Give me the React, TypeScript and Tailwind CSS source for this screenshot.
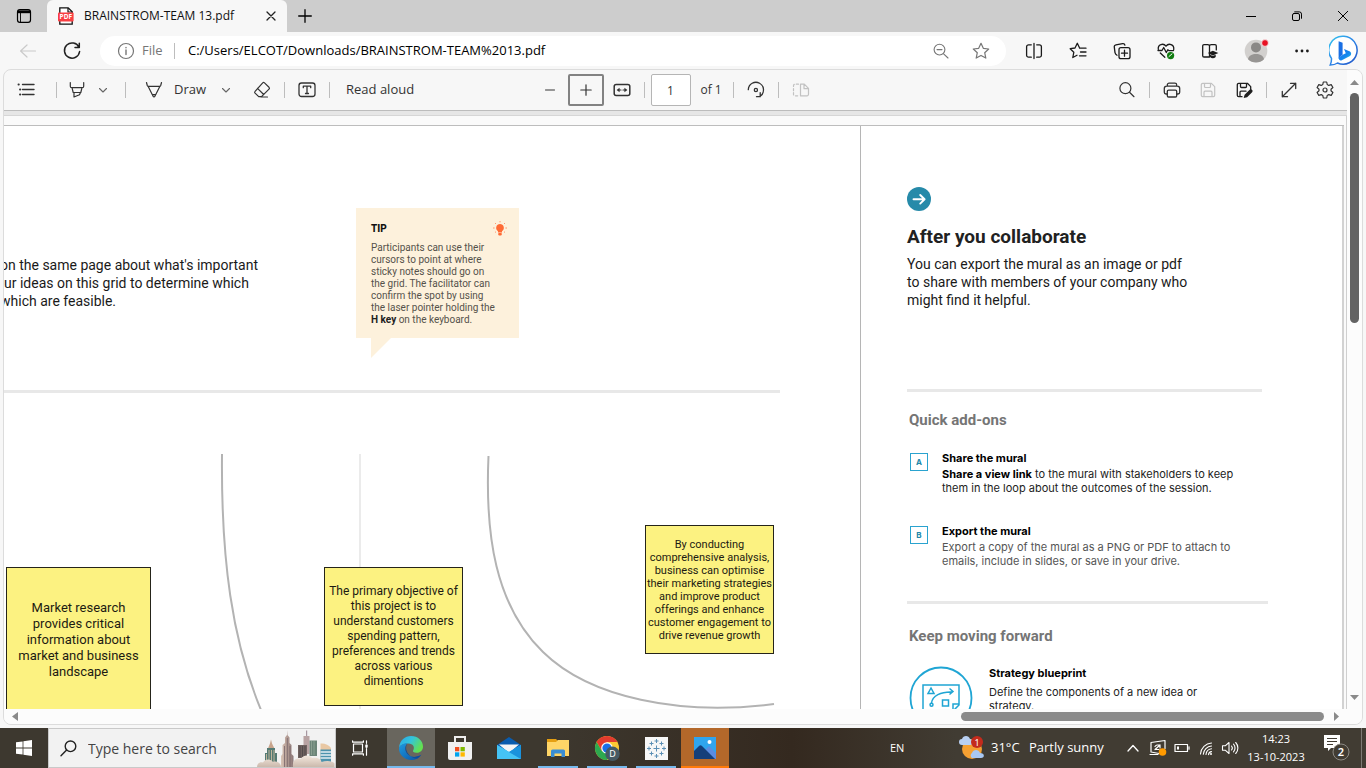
import type { ReactNode } from "react";

const ui = "font-['Open_Sans','Noto_Sans',sans-serif]";

type IconProps = { children: ReactNode; className?: string; size?: number; width?: number };

function Icon({ children, className = "text-[#333]", size = 20, width = 1.2 }: IconProps) {
  return (
    <svg
      width={size}
      height={size}
      viewBox={`0 0 ${size} ${size}`}
      fill="none"
      stroke="currentColor"
      strokeWidth={width}
      strokeLinecap="round"
      strokeLinejoin="round"
      className={`shrink-0 ${className}`}
      aria-hidden="true"
    >
      {children}
    </svg>
  );
}

function IconButton({ label, className = "", children }: { label: string; className?: string; children: ReactNode }) {
  return (
    <button type="button" aria-label={label} className={`flex shrink-0 items-center justify-center ${className}`}>
      {children}
    </button>
  );
}

function Separator({ className = "" }: { className?: string }) {
  return <span className={`h-4 w-px shrink-0 bg-[#bdbdbd] ${className}`} />;
}

function TabStrip() {
  return (
    <div className="flex h-8 shrink-0 items-stretch bg-[#cdcdcd]">
      <IconButton label="Tab actions" className="w-[47px]">
        <Icon size={16} className="text-black" width={1.2}>
          <rect x="1.5" y="1.7" width="13" height="12.6" rx="2.4" />
          <path d="M2 2.4h12v2.800H2z" fill="currentColor" stroke="none" />
          <path d="M4.500 5.400v8.600" strokeWidth=".9" />
        </Icon>
      </IconButton>
      <div className="flex w-60 items-center rounded-t-md bg-[#f7f7f7] pl-[11px]">
        <svg width="16" height="18" viewBox="0 0 16 18" className="shrink-0" aria-hidden="true">
          <path d="M1.8 .8h8.4l4 4v12.4H1.8z" fill="#fff" stroke="#111" strokeWidth="1.3" />
          <path d="M10 1v4h4" fill="none" stroke="#111" strokeWidth="1.2" />
          <rect x="0" y="5.5" width="15.6" height="9" rx="1" fill="#f93e42" />
          <text x="7.8" y="12.4" textAnchor="middle" fontSize="6.5" fontWeight="700" fill="#fff" fontFamily="Noto Sans">
            PDF
          </text>
        </svg>
        <span className="ml-2.5 flex-1 whitespace-nowrap text-[12px] text-[#111]">BRAINSTROM-TEAM 13.pdf</span>
        <IconButton label="Close tab" className="mr-1.5 w-5">
          <Icon size={10} className="text-[#222]" width={1.3}>
            <path d="M1 1l8 8M9 1l-8 8" />
          </Icon>
        </IconButton>
      </div>
      <IconButton label="New tab" className="w-9">
        <Icon size={14} className="text-black" width={1.3}>
          <path d="M7 .7v12.6M.7 7h12.6" />
        </Icon>
      </IconButton>
      <div className="ml-auto flex">
        <IconButton label="Minimize" className="w-[46px]">
          <Icon size={10} className="text-black" width={1}>
            <path d="M0 5.5h10" />
          </Icon>
        </IconButton>
        <IconButton label="Restore" className="w-[46px]">
          <Icon size={10} className="text-black" width={1}>
            <rect x=".5" y="2.5" width="7" height="7" rx="1.5" />
            <path d="M2.7 .9h4.6a2.2 2.2 0 0 1 2.2 2.2v4.2" />
          </Icon>
        </IconButton>
        <IconButton label="Close" className="w-[46px]">
          <Icon size={10} className="text-black" width={1}>
            <path d="M.3 .3l9.4 9.4M9.7 .3L.3 9.7" />
          </Icon>
        </IconButton>
      </div>
    </div>
  );
}

function AddressBar() {
  return (
    <div className="flex h-[37px] shrink-0 items-center pr-[7px] pl-[18px]">
      <IconButton label="Back">
        <Icon className="text-[#cacaca]">
          <path d="M17.5 10H3M9 4L2.6 10 9 16" />
        </Icon>
      </IconButton>
      <IconButton label="Refresh" className="ml-6">
        <Icon className="text-[#222]" width={1.5}>
          <path d="M17 6.4A7.6 7.6 0 1 0 17.6 10.5M17.3 2.3v4.3H13" />
        </Icon>
      </IconButton>
      <div className="ml-[18px] flex h-[30px] min-w-0 flex-1 items-center rounded-full bg-white pr-[15px] pl-4">
        <Icon className="text-[#767676]">
          <circle cx="10" cy="10" r="7.5" />
          <path d="M10 9v4.6M10 6.4v.3" strokeWidth="1.4" />
        </Icon>
        <span className="ml-1.5 w-6 text-[13px] text-[#767676]">File</span>
        <Separator className="ml-2 bg-[#999]" />
        <input
          aria-label="Address"
          defaultValue="C:/Users/ELCOT/Downloads/BRAINSTROM-TEAM%2013.pdf"
          className="ml-[13px] min-w-0 flex-1 bg-transparent text-[13px] text-black outline-none"
        />
        <IconButton label="Zoom out">
          <Icon className="text-[#767676]" width={1.1}>
            <circle cx="8.5" cy="8.6" r="5.4" />
            <path d="M12.6 12.8l4.4 4.2M6 8.6h5" />
          </Icon>
        </IconButton>
        <IconButton label="Add to favorites" className="ml-5">
          <Icon className="text-[#767676]">
            <path d="M10 2.3l2.3 5 5.4.7-4 3.7 1.1 5.4L10 14.4l-4.8 2.7 1.1-5.4-4-3.7 5.4-.7z" />
          </Icon>
        </IconButton>
      </div>
      <IconButton label="Split screen" className="ml-[18px]">
        <Icon className="text-[#1b1b1b]" width={1.3}>
          <path d="M7.300 3.800H4.600a2 2 0 0 0-2 2v8.400a2 2 0 0 0 2 2h2.700M12.700 3.800h2.700a2 2 0 0 1 2 2v8.400a2 2 0 0 1-2 2h-2.700M10 2.500v15" />
        </Icon>
      </IconButton>
      <IconButton label="Favorites" className="ml-6">
        <Icon className="text-[#1b1b1b]" width={1.3}>
          <path d="M11.5 6.8L9.3 2.3 7 7l-4.8.7 3.6 3.6-1 5.2L9 14.2M11.5 7.2H18M12.5 11H18M11.5 14.8H18" />
        </Icon>
      </IconButton>
      <IconButton label="Collections" className="ml-6">
        <Icon className="text-[#1b1b1b]" width={1.3}>
          <rect x="7" y="6.7" width="11" height="11" rx="2" />
          <path d="M12.5 9.2v6M9.5 12.2h6M5 14.3a4 4 0 0 1-2-2.7L2.3 6.2a2 2 0 0 1 1.6-2.4l6.7-1.2a2 2 0 0 1 2.3 1.6" />
        </Icon>
      </IconButton>
      <IconButton label="Browser essentials" className="ml-6">
        <Icon className="text-[#1b1b1b]" width={1.3}>
          <path d="M2.3 8.4C1.6 3.4 7.4 1.6 10 5.2 12.6 1.6 18.5 3.3 17.7 8.6M2 9.5h4l1.7-3 2.6 5 1.5-2.7 1 .8h4.7M4.3 12l4.5 4.3" />
          <circle cx="14.6" cy="14.6" r="3.6" fill="#107c10" stroke="none" />
          <path d="M13 15.5l3-2.6" stroke="#fff" strokeWidth="1" />
        </Icon>
      </IconButton>
      <IconButton label="Read view" className="ml-6">
        <Icon className="text-[#1b1b1b]" width={1.3}>
          <path d="M9.5 16H4a1.3 1.3 0 0 1-1.3-1.3V4.9A1.3 1.3 0 0 1 4 3.6h3.8c1 0 1.7.7 1.7 1.5V16M9.5 5.1c0-.8.8-1.5 1.7-1.5H15a1.3 1.3 0 0 1 1.3 1.3v4" />
          <path d="M12.8 9.7l5.6 2.4-5.600 2.400-5-2.400z" fill="currentColor" stroke="none" />
          <path d="M10 13.7v2.2c1.6 1.7 4 1.7 5.700 0v-2.200l-2.900 1.300z" fill="currentColor" stroke="none" />
        </Icon>
      </IconButton>
      <IconButton label="Profile" className="ml-6">
        <svg width="24" height="24" viewBox="0 0 24 24" className="overflow-visible" aria-hidden="true">
          <circle cx="12" cy="12" r="11.3" fill="#d2d0ce" />
          <circle cx="12" cy="8.4" r="5" fill="#8a8886" />
          <path d="M4 20.2c1-7 15-7 16 0a11.3 11.3 0 0 1-16 0z" fill="#979593" />
          <circle cx="21" cy="4" r="3.4" fill="#e81123" stroke="#f7f7f7" strokeWidth=".8" />
        </svg>
      </IconButton>
      <IconButton label="Settings and more" className="ml-6">
        <Icon className="text-[#1b1b1b]">
          <g fill="currentColor" stroke="none">
            <circle cx="4.6" cy="10" r="1.4" />
            <circle cx="10" cy="10" r="1.4" />
            <circle cx="15.4" cy="10" r="1.4" />
          </g>
        </Icon>
      </IconButton>
      <IconButton label="Bing" className="ml-[17px]">
        <svg width="30" height="32" viewBox="0 0 30 32" aria-hidden="true">
          <defs>
            <linearGradient id="bingRing" x1="0" y1="0" x2="1" y2="1">
              <stop offset="0" stopColor="#35c8ee" />
              <stop offset=".5" stopColor="#2f86e8" />
              <stop offset="1" stopColor="#1d4fc4" />
            </linearGradient>
            <linearGradient id="bingB" x1="0" y1="0" x2="1" y2="1">
              <stop offset="0" stopColor="#1a72ea" />
              <stop offset=".6" stopColor="#1488ee" />
              <stop offset="1" stopColor="#35d3dd" />
            </linearGradient>
          </defs>
          <path d="M15 1.2a14 14 0 1 1-6.500 26.800c-2 1.400-4.500 2-7.300 2 .9-1.700 1.400-3.400 1.300-6.600A14 14 0 0 1 15 1.200z" fill="#fff" stroke="url(#bingRing)" strokeWidth="1.500" />
          <path d="M9.600 6.200l4 1.600v11.800l-4 3.800z" fill="#1a6fe4" />
          <path d="M9.600 22.800l4.200-3 3-1.600-1.800-4.200 6 2.400c1.400.8 1.700 3.400 0 4.600l-8.200 4.200c-2 .7-3.200-.6-3.200-2.400z" fill="url(#bingB)" />
        </svg>
      </IconButton>
    </div>
  );
}

function Chevron() {
  return (
    <Icon size={12} className="text-[#666]" width={1.1}>
      <path d="M2.500 4.500L6 8l3.500-3.500" />
    </Icon>
  );
}

function PdfToolbar() {
  return (
    <div className="flex h-[41px] shrink-0 items-center border-b border-[#bcbcbc] text-[#333]">
      <div className="flex flex-1 items-center pl-3">
        <IconButton label="Table of contents">
          <Icon width={1.400}>
            <path d="M6.500 4.500H18M6.500 9.500H18M6.500 14.500H18" />
            <path d="M2.500 4.500h.3M4 9.500h.3M4 14.500h.3" strokeWidth="1.900" />
          </Icon>
        </IconButton>
        <Separator className="ml-5" />
        <IconButton label="Highlight" className="ml-2.5">
          <Icon>
            <path d="M3.300 2.500v3.700a1.500 1.500 0 0 0 1.500 1.500h10.400a1.500 1.500 0 0 0 1.500-1.500V2.500M5 7.700l1.200 4.800h7.600L15 7.700M7 12.700V17l5.500-2.300 1-2.200" />
          </Icon>
        </IconButton>
        <IconButton label="Highlight options" className="ml-2.5">
          <Chevron />
        </IconButton>
        <Separator className="ml-4" />
        <button type="button" className="ml-[18px] flex w-[88px] shrink-0 items-center text-[13px] whitespace-nowrap">
          <Icon>
            <path d="M2.500 2.500l.8 3c.2.600.6.900 1.200.9h11c.6 0 1-.3 1.200-.9l.8-3M4.200 6.600l4.900 9.700c.4.800 1.400.8 1.800 0l4.900-9.700M8.200 14.600h3.600" />
          </Icon>
          <span className="ml-2.5 flex-1 text-left">Draw</span>
          <Chevron />
        </button>
        <IconButton label="Erase" className="ml-5">
          <Icon>
            <path d="M10.700 2.900a1.300 1.300 0 0 1 1.800 0l4.500 4.400a1.300 1.300 0 0 1 0 1.800l-7.500 7.500H6.700l-3.600-3.500a1.300 1.300 0 0 1 0-1.800zM5.500 8.300l6.200 6.200M9 17h6.500" />
          </Icon>
        </IconButton>
        <Separator className="ml-3" />
        <IconButton label="Add text" className="ml-3">
          <Icon width={1.300}>
            <rect x="2" y="3" width="16" height="13.500" rx="2.500" />
            <path d="M6.300 7.700V6.200h7.400v1.500M10 6.200v7.300M8.500 13.500h3" />
          </Icon>
        </IconButton>
        <Separator className="ml-3" />
        <button type="button" className="ml-4 text-[13px] whitespace-nowrap">
          Read aloud
        </button>
      </div>

      <div className="flex shrink-0 items-center text-[12px]">
        <IconButton label="Zoom out of page" className="w-[18px]">
          <Icon size={10} className="text-[#777]" width={1.500}>
            <path d="M.500 5h9" />
          </Icon>
        </IconButton>
        <IconButton label="Zoom in" className="ml-[9px] h-8 w-9 rounded-xs border-2 border-[#828282]">
          <Icon size={12} width={1.200}>
            <path d="M6 .8v10.400M.8 6h10.400" />
          </Icon>
        </IconButton>
        <IconButton label="Fit to width" className="ml-2">
          <Icon width={1.500}>
            <rect x="2.200" y="4.500" width="15.600" height="11" rx="2" />
            <path d="M9 10H6.500M11 10h2.500" strokeWidth="1.200" />
            <path d="M4.600 10l3-2.300v4.600zM15.400 10l-3-2.300v4.600z" fill="currentColor" stroke="none" />
          </Icon>
        </IconButton>
        <Separator className="ml-3" />
        <input
          aria-label="Page number"
          defaultValue="1"
          className="ml-1.5 h-8 w-10 rounded-xs border border-[#b5b5b5] bg-white text-center outline-none"
        />
        <span className="ml-2.5 w-6 whitespace-nowrap">of 1</span>
        <Separator className="ml-2" />
        <IconButton label="Rotate" className="ml-3">
          <Icon width={1.300}>
            <path d="M2.300 9.600A7.600 7.600 0 1 1 14.200 16.200M14.200 12.700v4h-3.700" />
            <circle cx="9.900" cy="10" r="1.600" />
          </Icon>
        </IconButton>
        <Separator className="ml-3" />
        <IconButton label="Page view" className="ml-3">
          <Icon className="text-[#c2c2c2]">
            <path d="M9.500 4.200v11.600H16a1.500 1.500 0 0 0 1.500-1.500V8.400l-4.200-4.200zM13 4.500v4.200h4.300" />
            <path d="M7.500 4.200H4A1.500 1.500 0 0 0 2.500 5.700v8.600A1.500 1.500 0 0 0 4 15.800h3.500" strokeDasharray="2.200 2" />
          </Icon>
        </IconButton>
      </div>

      <div className="flex flex-1 items-center justify-end pr-3">
        <IconButton label="Find">
          <Icon width={1.200}>
            <circle cx="8.400" cy="8.200" r="5.500" />
            <path d="M12.500 12.300l4.500 4.400" />
          </Icon>
        </IconButton>
        <Separator className="ml-3" />
        <IconButton label="Print" className="ml-3">
          <Icon width={1.300}>
            <path d="M5.300 6.200V5a1.800 1.800 0 0 1 1.800-1.800h5.800A1.800 1.800 0 0 1 14.700 5v1.200M5.300 14H4a1.700 1.700 0 0 1-1.700-1.700V8.600A2.400 2.400 0 0 1 4.700 6.200h10.600a2.400 2.400 0 0 1 2.400 2.400v3.700A1.700 1.700 0 0 1 16 14h-1.300" />
            <rect x="5.300" y="10.200" width="9.400" height="6.800" rx="1.300" />
          </Icon>
        </IconButton>
        <IconButton label="Save" className="ml-4">
          <Icon className="text-[#c2c2c2]">
            <path d="M4.700 3.300h8.700l3.300 3.300v8.700a1.400 1.400 0 0 1-1.400 1.400H4.700a1.400 1.400 0 0 1-1.400-1.400V4.700a1.400 1.400 0 0 1 1.400-1.400zM6.500 3.500v3a1 1 0 0 0 1 1h4a1 1 0 0 0 1-1v-3M6 16.500v-4.300a1 1 0 0 1 1-1h6a1 1 0 0 1 1 1v4.300" />
          </Icon>
        </IconButton>
        <IconButton label="Save as" className="ml-4">
          <Icon className="text-[#1f1f1f]" width={1.300}>
            <path d="M8 16.700H4.700a1.400 1.400 0 0 1-1.400-1.400V4.700a1.400 1.400 0 0 1 1.400-1.400h8.700l3.300 3.300v3M6.500 3.500v3a1 1 0 0 0 1 1h4a1 1 0 0 0 1-1v-3M6 16.500v-4.300a1 1 0 0 1 1-1h5" />
            <path d="M15.600 9.800a1.700 1.700 0 0 1 2.500 2.400l-5 5-3.400.9.900-3.300z" fill="currentColor" stroke="none" />
          </Icon>
        </IconButton>
        <Separator className="ml-3" />
        <IconButton label="Full screen" className="ml-3">
          <Icon width={1.300}>
            <path d="M3.300 16.700L16.700 3.300M11.500 3.300h5.200v5.200M3.300 11.500v5.200h5.200" />
          </Icon>
        </IconButton>
        <IconButton label="Settings" className="ml-4">
          <Icon width={1.200}>
            <path d="M8.300 2h3.400l.5 2.500 1.600.9 2.400-.8 1.700 2.900L16 9.200v1.600l1.900 1.700-1.700 2.900-2.400-.8-1.600.9-.5 2.500H8.300l-.5-2.500-1.600-.9-2.400.8-1.700-2.900L4 10.800V9.200L2.100 7.500l1.700-2.900 2.400.8 1.600-.9z" />
            <circle cx="10" cy="10" r="2" />
          </Icon>
        </IconButton>
      </div>
    </div>
  );
}

function Note({ className, children }: { className: string; children: ReactNode }) {
  return (
    <div
      className={`absolute flex items-center justify-center border border-[#25241a] bg-[#fcf281] text-center whitespace-nowrap text-[#1c1b12] ${className}`}
    >
      <p>{children}</p>
    </div>
  );
}

function TipCard() {
  return (
    <div className="w-[163px] shrink-0">
      <div className="h-[130px] bg-[#fdf1dc] pt-[13px] pl-[15px]">
        <div className="flex items-center justify-between pr-3">
          <h3 className="text-[10px] leading-[16px] font-extrabold text-[#111]">TIP</h3>
          <svg width="14" height="16" viewBox="0 0 14 16" aria-hidden="true">
            <path d="M7 3a3.900 3.900 0 0 1 2 7.200V11.500H5v-1.300A3.900 3.900 0 0 1 7 3z" fill="#ff6b35" />
            <rect x="5.200" y="12" width="3.600" height="2.400" rx=".8" fill="#ff6b35" />
            <path d="M7 0v1.400M2 2l1 1M12 2l-1 1M0 7h1.600M12.400 7H14M2 11.500l1-.8M12 11.500l-1-.8" stroke="#ff8d63" strokeWidth=".9" />
          </svg>
        </div>
        <p className="mt-[5px] text-[10px] leading-[12px] whitespace-nowrap text-[#55524b]">
          Participants can use their
          <br />
          cursors to point at where
          <br />
          sticky notes should go on
          <br />
          the grid. The facilitator can
          <br />
          confirm the spot by using
          <br />
          the laser pointer holding the
          <br />
          <b className="text-[#222]">H key</b> on the keyboard.
        </p>
      </div>
      <svg width="20" height="20" viewBox="0 0 20 20" className="ml-[15px] block" aria-hidden="true">
        <path d="M0 0h20L0 20z" fill="#fdf1dc" />
      </svg>
    </div>
  );
}

function Board() {
  return (
    <section className="flex min-w-0 flex-1 flex-col overflow-hidden">
      <div className="flex h-[264px] shrink-0 items-start pt-[82px]">
        <p className="mt-12 -ml-1 w-[356px] shrink-0 text-[14px] leading-[18px] whitespace-nowrap text-[#1a1a1a]">
          on the same page about what's important
          <br />
          <span className="pl-1">ur ideas on this grid to determine which</span>
          <br />
          which are feasible.
        </p>
        <TipCard />
      </div>
      <hr className="mr-20 h-[3px] shrink-0 border-0 bg-[#e8e8e8]" />
      <div className="relative flex-1 overflow-hidden">
        <svg width="856" height="317" viewBox="4 393 856 317" fill="none" className="absolute top-0 left-0" aria-hidden="true">
          <path d="M360 454V710" stroke="#ebebeb" strokeWidth="2" />
          <path d="M222 454C221 560 232 640 261 710" stroke="#b3b3b3" strokeWidth="2" />
          <path d="M488.500 456C485 535 495 605 543 652C590 698 680 716 774 704" stroke="#b3b3b3" strokeWidth="2" />
        </svg>
        <Note className="top-[174px] left-[2px] h-[146px] w-[145px] text-[13px] leading-[16px]">
          Market research
          <br />
          provides critical
          <br />
          information about
          <br />
          market and business
          <br />
          landscape
        </Note>
        <Note className="top-[174px] left-[320px] h-[139px] w-[139px] text-[12px] leading-[15px]">
          The primary objective of
          <br />
          this project is to
          <br />
          understand customers
          <br />
          spending pattern,
          <br />
          preferences and trends
          <br />
          across various
          <br />
          dimentions
        </Note>
        <Note className="top-[132px] left-[641px] h-[129px] w-[129px] text-[11px] leading-[13px]">
          By conducting
          <br />
          comprehensive analysis,
          <br />
          business can optimise
          <br />
          their marketing strategies
          <br />
          and improve product
          <br />
          offerings and enhance
          <br />
          customer engagement to
          <br />
          drive revenue growth
        </Note>
      </div>
    </section>
  );
}

function AddOn({ letter, title, children, className = "" }: { letter: string; title: string; children: ReactNode; className?: string }) {
  return (
    <div className={`flex items-start font-['Inter',sans-serif] ${className}`}>
      <span className="mt-[3px] flex h-[18px] w-[18px] shrink-0 items-center justify-center border border-[#2aa3cf] text-[8px] font-bold text-[#2287a8]">
        {letter}
      </span>
      <div className="ml-3.5 whitespace-nowrap">
        <h3 className="text-[11px] leading-[16px] font-bold text-black">{title}</h3>
        <p className="mt-px text-[11px] leading-[14px]">{children}</p>
      </div>
    </div>
  );
}

function AfterPanel() {
  return (
    <section className="w-[484px] shrink-0 overflow-hidden border-r-2 border-l border-r-[#d2d2d2] border-l-[#b5b5b5] pt-[61px] pl-[46px]">
      <svg width="24" height="24" viewBox="0 0 24 24" className="block" aria-hidden="true">
        <circle cx="12" cy="12" r="12" fill="#268aa9" />
        <path d="M6.500 12.300h11M13.200 8l4.400 4.300-4.400 4.300" fill="none" stroke="#fff" strokeWidth="1.900" strokeLinecap="round" strokeLinejoin="round" />
      </svg>
      <h1 className="mt-3.5 text-[19px] leading-[24px] font-bold text-[#212121]">After you collaborate</h1>
      <p className="mt-1.5 text-[14px] leading-[18px] whitespace-nowrap text-[#1a1a1a]">
        You can export the mural as an image or pdf
        <br />
        to share with members of your company who
        <br />
        might find it helpful.
      </p>
      <hr className="mt-20 h-[3px] w-[355px] border-0 bg-[#e8e8e8]" />
      <h2 className="mt-[18px] ml-0.5 text-[15px] leading-[20px] font-bold text-[#757575]">Quick add-ons</h2>
      <AddOn letter="A" title="Share the mural" className="mt-5 ml-[3px] text-[#222]">
        <b className="text-black">Share a view link</b> to the mural with stakeholders to keep
        <br />
        them in the loop about the outcomes of the session.
      </AddOn>
      <AddOn letter="B" title="Export the mural" className="mt-7 ml-[3px] text-[#555]">
        Export a copy of the mural as a PNG or PDF to attach to
        <br />
        emails, include in slides, or save in your drive.
      </AddOn>
      <hr className="mt-[33px] h-[3px] w-[361px] border-0 bg-[#e8e8e8]" />
      <h2 className="mt-[22px] ml-0.5 text-[15px] leading-[20px] font-bold text-[#757575]">Keep moving forward</h2>
      <div className="mt-5 ml-0.5 flex items-start">
        <svg width="64" height="64" viewBox="0 0 64 64" fill="none" stroke="#1fa5d4" strokeWidth="1.500" className="shrink-0" aria-hidden="true">
          <circle cx="32" cy="32" r="30.500" strokeWidth="1.800" />
          <path d="M14 48V19h36v20l-6 6H14M50 38h-6v7" />
          <path d="M22 22l-3 5.500h6z" />
          <path d="M22.500 37c1-7 9-11.500 21-11M40.500 22.500l3.500 3-3.500 3" />
          <circle cx="22.500" cy="38.700" r="1.500" />
          <rect x="33.500" y="34" width="6" height="6" />
        </svg>
        <div className="ml-4 font-['Inter',sans-serif] text-[11px] leading-[14px] whitespace-nowrap">
          <h3 className="font-bold text-black">Strategy blueprint</h3>
          <p className="mt-[5px] text-[#222]">
            Define the components of a new idea or
            <br />
            strategy.
          </p>
        </div>
      </div>
    </section>
  );
}

function Viewer() {
  return (
    <div className="mr-[3px] ml-[3px] flex min-h-0 flex-1 overflow-hidden rounded-lg border border-[#dcdcdc] bg-[#f7f7f7]">
      <div className="flex min-w-0 flex-1 flex-col">
        <PdfToolbar />
        <div className="h-[5px] shrink-0 border-b border-[#d6d6d6] bg-[#e6e6e6]" />
        <main className="flex min-h-0 flex-1 overflow-hidden border-r border-[#cfcfcf] bg-[#fafafa] pt-[9px] pr-0.5 font-['Roboto','Inter',sans-serif]">
          <div className="flex min-w-0 flex-1 border-t border-[#bdbdbd] bg-white">
            <Board />
            <AfterPanel />
          </div>
        </main>
        <div className="flex h-[15px] shrink-0 items-center justify-between bg-[#fcfcfc] pr-2 pl-2">
          <svg width="6" height="9" viewBox="0 0 6 9" aria-hidden="true">
            <path d="M6 0v9L0 4.500z" fill="#8a8a8a" />
          </svg>
          <div className="mr-2.5 ml-auto h-[9px] w-[363px] rounded-full bg-[#8b8b8b]" />
          <svg width="5" height="9" viewBox="0 0 5 9" aria-hidden="true">
            <path d="M0 0v9l5-4.500z" fill="#8a8a8a" />
          </svg>
        </div>
      </div>
      <div className="flex w-[15px] shrink-0 flex-col items-center bg-[#fcfcfc] pt-2.5 pb-6">
        <svg width="9" height="5" viewBox="0 0 9 5" aria-hidden="true">
          <path d="M0 5h9L4.500 0z" fill="#8a8a8a" />
        </svg>
        <div className="mt-2 h-[230px] w-[9px] rounded-full bg-[#636363]" />
        <svg width="9" height="5" viewBox="0 0 9 5" className="mt-auto" aria-hidden="true">
          <path d="M0 0h9L4.500 5z" fill="#8a8a8a" />
        </svg>
      </div>
    </div>
  );
}

function CityArt() {
  return (
    <svg width="78" height="38" viewBox="0 0 78 38" className="shrink-0" aria-hidden="true">
      <defs>
        <linearGradient id="cloud" x1="0" y1="0" x2="0" y2="1">
          <stop offset="0" stopColor="#f4e9df" />
          <stop offset="1" stopColor="#cbb9ac" />
        </linearGradient>
        <linearGradient id="tower" x1="0" y1="0" x2="1" y2="0">
          <stop offset="0" stopColor="#d9c4b6" />
          <stop offset=".5" stopColor="#b39c94" />
          <stop offset="1" stopColor="#8b7777" />
        </linearGradient>
      </defs>
      <path d="M14 10.500l1 4 3 6h-7.500l2.500-6z" fill="#c8a48c" />
      <path d="M10 19h8v5h2v9H8v-9h2z" fill="#547a73" />
      <path d="M9.500 25v9M12 21v13M14.500 21v13M17 21v13" stroke="#cdbb9f" strokeWidth=".9" />
      <path d="M30.500 1v5l2 2.500V14l2 2v9l2 2v11H24V27l1.500-2v-9l2.500-2V8.500L30 6z" fill="url(#tower)" />
      <path d="M27.500 17v21M30.300 9v29M33 17v21" stroke="#6f5c63" strokeWidth=".7" />
      <path d="M49 1.500h1.200V8H49z" fill="#a797a0" />
      <path d="M46.500 7h6v18h-6z" fill="#b8a3a3" />
      <path d="M41 16h9v13h-9z" fill="#6f625f" />
      <path d="M43 17v11M45.500 17v11M48 17v11" stroke="#4f4849" strokeWidth=".9" />
      <path d="M52.500 11.500H60V27h-7.500z" fill="#6c8579" />
      <path d="M54.500 12v14M57 12v14" stroke="#93a798" strokeWidth=".8" />
      <path d="M63.500 20v-5.500c4-.5 8 1 10.500 4.500v12H63.500z" fill="#e9c8a4" />
      <path d="M63.500 20.500H74V34H63.500z" fill="#4d93ad" />
      <path d="M63.500 23H74M63.500 26H74M63.500 29H74" stroke="#e3eef2" strokeWidth="1.300" />
      <path d="M0 38c0-3.500 3-5.500 6-4.500 2-4 8-4 10-.5 4-1.500 8 1 8 5zM36 38c-1-6 3-10 8-8 1-4 9-5 11-1 5-1 9 1 9.500 4 5-2 12-1 13 1.500V38z" fill="url(#cloud)" />
    </svg>
  );
}

function TaskButton({ label, className = "", bar, children }: { label: string; className?: string; bar?: string; children: ReactNode }) {
  return (
    <button type="button" aria-label={label} className={`relative flex w-12 items-center justify-center ${className}`}>
      {children}
      {bar && <span className={`absolute bottom-0 h-0.5 ${bar}`} />}
    </button>
  );
}

function Taskbar() {
  return (
    <footer className="flex h-10 shrink-0 items-stretch bg-linear-to-r from-[#3d382f] from-40% via-[#34291f] via-58% to-[#413c33] to-70% text-white">
      <TaskButton label="Start">
        <svg width="16" height="16" viewBox="0 0 16 16" fill="#fff" aria-hidden="true">
          <path d="M0 2.300l6.600-.9v6.200H0zM7.400 1.300L16 0v7.600H7.400zM0 8.400h6.600v6.200L0 13.700zM7.400 8.400H16V16l-8.600-1.300z" />
        </svg>
      </TaskButton>
      <label className="flex w-72 items-center border border-[#c9c9c9] bg-[#f2f2f2] pl-[11px]">
        <Icon size={17} className="text-[#222]" width={1.400}>
          <circle cx="10.500" cy="6.300" r="5.300" />
          <path d="M6.600 10L1 15.800" />
        </Icon>
        <input
          aria-label="Search"
          placeholder="Type here to search"
          className="ml-[11px] min-w-0 flex-1 bg-transparent text-[14px] outline-none placeholder:text-[#444]"
        />
        <CityArt />
      </label>
      <TaskButton label="Task view" className="mr-[3px]">
        <Icon size={16} className="text-white" width={1.200}>
          <rect x="1.500" y="4" width="9" height="8" />
          <path d="M.6.800v1.400h10.800V.800M.6 15.200v-1.400h10.800v1.400M14.500.800v2.500M14.500 8.500v6.700" />
          <path d="M14.500 5.500v1.200" strokeWidth="2.400" />
        </Icon>
      </TaskButton>
      <div className="flex gap-px">
        <TaskButton label="Edge" className="bg-[#69665e]" bar="w-12 bg-[#76b9ed]">
          <svg width="26" height="26" viewBox="0 0 26 26" aria-hidden="true">
            <defs>
              <linearGradient id="edgeTop" x1="0" y1="0" x2="1" y2=".5">
                <stop offset="0" stopColor="#2aa6e8" />
                <stop offset=".5" stopColor="#33c4dc" />
                <stop offset="1" stopColor="#63e050" />
              </linearGradient>
              <linearGradient id="edgeLow" x1="0" y1="0" x2="1" y2="1">
                <stop offset="0" stopColor="#1d9ae0" />
                <stop offset="1" stopColor="#0b52a4" />
              </linearGradient>
            </defs>
            <path d="M1 12.500C2 5 7 1 13 1c7 0 12 5 12 10.500 0 4-3 6.300-6.500 6.300-3 0-4-1.300-3.300-2.500 2-3-.2-6.800-4.700-6.800C6 8.500 2.500 10 1 12.500z" fill="url(#edgeTop)" />
            <path d="M1 12.800C2.300 9.600 6 8 9.500 8.200 6 11 7 16.500 10 19.500c3 3 8 3.300 13.300.3C21 23.300 17.300 25 13.500 25 6 25 .6 19.500 1 12.800z" fill="url(#edgeLow)" />
            <path d="M9.300 8.500c-3 3.300-2.300 8.300.7 11 3 3 8 3.300 13.300.3-1 1.600-2.300 2.800-3.800 3.700-6 .5-14.500-7.500-10.200-15z" fill="#0f4c9c" />
          </svg>
        </TaskButton>
        <TaskButton label="Store">
          <svg width="24" height="26" viewBox="0 0 24 26" aria-hidden="true">
            <path d="M7 8V2h10v6" fill="none" stroke="#eee" strokeWidth="2" />
            <path d="M0 7h24v16a2 2 0 0 1-2 2H2a2 2 0 0 1-2-2z" fill="#f1f1f1" />
            <path d="M7 12h4.300v4.300H7z" fill="#f25022" />
            <path d="M12.500 12h4.300v4.300h-4.300z" fill="#7fba00" />
            <path d="M7 17.300h4.300v4.300H7z" fill="#00a4ef" />
            <path d="M12.500 17.300h4.300v4.300h-4.300z" fill="#ffb900" />
          </svg>
        </TaskButton>
        <TaskButton label="Mail">
          <svg width="24" height="24" viewBox="0 0 24 24" aria-hidden="true">
            <path d="M0 9L12 1l12 8v6H0z" fill="#0a5cae" />
            <path d="M2 8.500h20L12 17z" fill="#f5f5f5" />
            <path d="M0 9l12 7L24 9v14H0z" fill="#30b0ee" />
            <path d="M0 9l24 14H0z" fill="#45c3f5" />
            <path d="M24 9v14L12 16z" fill="#1a92dd" />
          </svg>
        </TaskButton>
        <TaskButton label="File Explorer" bar="w-10 bg-[#76b9ed]">
          <svg width="22" height="20" viewBox="0 0 22 20" aria-hidden="true">
            <path d="M0 1h9l2 2v4H0z" fill="#e59f12" />
            <path d="M0 4h9l2-2h11v16H0z" fill="#ffd567" />
            <path d="M4 19v-6a1.500 1.500 0 0 1 1.500-1.500h11A1.500 1.500 0 0 1 18 13v6h-3.500v-3.500h-7V19z" fill="#3a8dd4" />
          </svg>
        </TaskButton>
        <TaskButton label="Chrome" bar="w-10 bg-[#76b9ed]">
          <svg width="26" height="26" viewBox="0 0 26 26" aria-hidden="true">
            <circle cx="13" cy="13" r="12" fill="#fcc934" />
            <path d="M2.600 7A12 12 0 0 1 23.400 7H13l-5.200 9z" fill="#e33b2e" />
            <path d="M2.600 7a12 12 0 0 0 10.400 18l5.200-9H7.800z" fill="#2da94f" />
            <circle cx="13" cy="13" r="5.800" fill="#fff" />
            <circle cx="13" cy="13" r="4.600" fill="#1a6fe8" />
            <circle cx="18.500" cy="18.800" r="7.200" fill="#455a64" />
            <text x="18.500" y="22" textAnchor="middle" fontSize="9" fill="#fff" fontFamily="Noto Sans">
              D
            </text>
          </svg>
        </TaskButton>
        <TaskButton label="Tableau" bar="w-10 bg-[#76b9ed]">
          <svg width="23" height="23" viewBox="0 0 23 23" fill="none" stroke="#5b8fb5" strokeWidth="1" aria-hidden="true">
            <path d="M0 0h23v23H0z" fill="#f7f7f7" stroke="none" />
            <path d="M11.500 8.500v6M8.500 11.500h6M11.500 2v4M9.500 4h4M11.500 17v4M9.500 19h4M4 9.500v4M2 11.500h4M19 9.500v4M17 11.500h4M6.500 4.500v4M4.500 6.500h4M16.500 4.500v4M14.500 6.500h4M6.500 14.500v4M4.500 16.500h4M16.500 14.500v4M14.500 16.500h4" />
          </svg>
        </TaskButton>
        <TaskButton label="Photos" className="bg-[#b3682a]" bar="w-12 bg-[#ff7a0a]">
          <svg width="22" height="22" viewBox="0 0 22 22" aria-hidden="true">
            <path d="M0 0h22v22H0z" fill="#2fa5ee" />
            <path d="M10 14l5-5 7 7v6H10z" fill="#5b8ce0" />
            <path d="M0 14l5-5c1-1 2-1 3 0l13 13H0z" fill="#153f7a" />
            <circle cx="15.500" cy="5" r="2" fill="#fff" />
          </svg>
        </TaskButton>
      </div>
      <div className="ml-auto flex items-center text-[12px]">
        <span className="w-5 text-[11px]">EN</span>
        <button type="button" className="ml-[49px] flex items-center text-[13px] whitespace-nowrap">
          <svg width="26" height="26" viewBox="0 0 26 26" className="shrink-0" aria-hidden="true">
            <circle cx="13" cy="14" r="10" fill="#f5a032" />
            <path d="M3 10a3 3 0 0 1 0-6c1-4 7-4 8 0 3 0 4 6 0 6z" fill="#b9d0f2" />
            <path d="M13 23a3 3 0 0 1 0-5c1-4 7-4 8 0 5 0 5 5 1 5z" fill="#a9c8f2" />
            <circle cx="18" cy="7" r="6" fill="#c42b1c" />
            <text x="18" y="10.500" textAnchor="middle" fontSize="9" fill="#fff" fontFamily="Noto Sans">
              1
            </text>
          </svg>
          <span className="ml-1.5 w-[38px] text-left">31°C</span>
          <span className="w-20 text-left">Partly sunny</span>
        </button>
        <IconButton label="Show hidden icons" className="ml-[18px]">
          <Icon size={12} className="text-white" width={1.300}>
            <path d="M1 9l5-5.500L11 9" />
          </Icon>
        </IconButton>
        <Icon size={18} className="ml-2.5 text-white">
          <path d="M10 14.500L2 13V3.500L16 1.500v8M1 15.500h8M6 10.500l5-4.500M11 9V6H8M6 7.500a3 3 0 0 1 2-1.500M7 10.500h3" />
          <circle cx="13.500" cy="13" r="3.800" fill="#ff9a00" stroke="none" />
        </Icon>
        <Icon size={16} className="ml-[7px] text-white">
          <rect x="1" y="4.500" width="12.500" height="7" />
          <path d="M3 6.500h2v3H3z" fill="currentColor" stroke="none" />
          <path d="M15 6.800v2.400" />
        </Icon>
        <Icon size={16} className="ml-2 text-white" width={1.100}>
          <path d="M2.500 14A12 12 0 0 1 13.500 3M5.300 14.300A9 9 0 0 1 13.500 6M8 14.500A6.300 6.300 0 0 1 13.500 8.800M10.500 14.600a3.500 3.500 0 0 1 3-3" />
          <circle cx="13" cy="14" r="1" fill="currentColor" stroke="none" />
        </Icon>
        <Icon size={18} className="ml-[7px] text-white" width={1.100}>
          <path d="M1.500 6.800h2.700L8 3.500v11l-3.800-3.300H1.500zM10.500 7a3 3 0 0 1 0 4M12.500 5.200a5.500 5.500 0 0 1 0 7.600M14.700 3.500a8 8 0 0 1 0 11" />
        </Icon>
        <div className="ml-1.5 w-[62px] text-center text-[11px] leading-[18px] whitespace-nowrap">
          <div>14:23</div>
          <div>13-10-2023</div>
        </div>
        <IconButton label="Notifications" className="ml-4">
          <svg width="28" height="28" viewBox="0 0 28 28" aria-hidden="true">
            <path d="M1 1h16v13H8l-3 3v-3H1z" fill="#fff" />
            <path d="M4 4.500h10M4 7.500h10M4 10.500h6" stroke="#413c33" strokeWidth="1" />
            <circle cx="18" cy="18" r="8" fill="#413c33" stroke="#8d8a84" strokeWidth="1" />
            <text x="18" y="22" textAnchor="middle" fontSize="11" fontWeight="600" fill="#fff" fontFamily="Noto Sans">
              2
            </text>
          </svg>
        </IconButton>
        <span className="mr-1 ml-[10px] h-10 w-px bg-[#7d7a74]" />
      </div>
    </footer>
  );
}

export default function App() {
  return (
    <div className={`flex h-screen flex-col overflow-hidden bg-[#f7f7f7] ${ui}`}>
      <TabStrip />
      <AddressBar />
      <Viewer />
      <div className="h-[3px] shrink-0" />
      <Taskbar />
    </div>
  );
}
